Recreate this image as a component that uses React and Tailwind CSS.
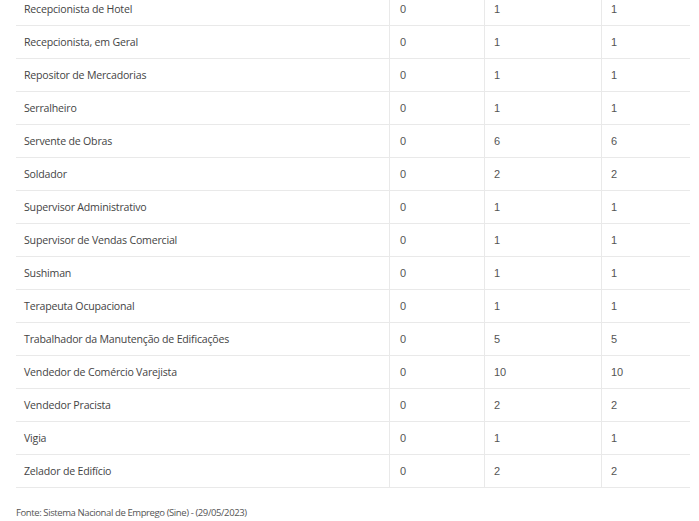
const rows = [
  ["Recepcionista de Hotel", "0", "1", "1"],
  ["Recepcionista, em Geral", "0", "1", "1"],
  ["Repositor de Mercadorias", "0", "1", "1"],
  ["Serralheiro", "0", "1", "1"],
  ["Servente de Obras", "0", "6", "6"],
  ["Soldador", "0", "2", "2"],
  ["Supervisor Administrativo", "0", "1", "1"],
  ["Supervisor de Vendas Comercial", "0", "1", "1"],
  ["Sushiman", "0", "1", "1"],
  ["Terapeuta Ocupacional", "0", "1", "1"],
  ["Trabalhador da Manutenção de Edificações", "0", "5", "5"],
  ["Vendedor de Comércio Varejista", "0", "10", "10"],
  ["Vendedor Pracista", "0", "2", "2"],
  ["Vigia", "0", "1", "1"],
  ["Zelador de Edifício", "0", "2", "2"],
];

export default function App() {
  return (
    <div className="w-[699px] h-[521px] overflow-hidden bg-white">
      <div className="-mt-[7px] pl-[16px]">
        {rows.map((r, i) => (
          <div
            key={i}
            className="grid w-[674px] grid-cols-[373px_95px_117px_89px] h-[33px] border-b border-[#e9e9e9]"
          >
            <div className="flex items-center pl-[8px] pt-[1px] text-[10.6px] text-[#444] font-['Open_Sans',sans-serif] tracking-[-0.2px]">
              {r[0]}
            </div>
            <div className="flex items-center pl-[10px] border-l border-[#e9e9e9] text-[11px] text-[#555] font-['Liberation_Sans',Arial,sans-serif]">
              {r[1]}
            </div>
            <div className="flex items-center pl-[9px] border-l border-[#e9e9e9] text-[11px] text-[#555] font-['Liberation_Sans',Arial,sans-serif]">
              {r[2]}
            </div>
            <div className="flex items-center pl-[9px] border-l border-[#e9e9e9] text-[11px] text-[#555] font-['Liberation_Sans',Arial,sans-serif]">
              {r[3]}
            </div>
          </div>
        ))}
        <div className="pt-[18px] text-[9.5px] text-[#555] font-['Open_Sans',sans-serif] tracking-[-0.4px]">
          Fonte: Sistema Nacional de Emprego (Sine) - (29/05/2023)
        </div>
      </div>
    </div>
  );
}
